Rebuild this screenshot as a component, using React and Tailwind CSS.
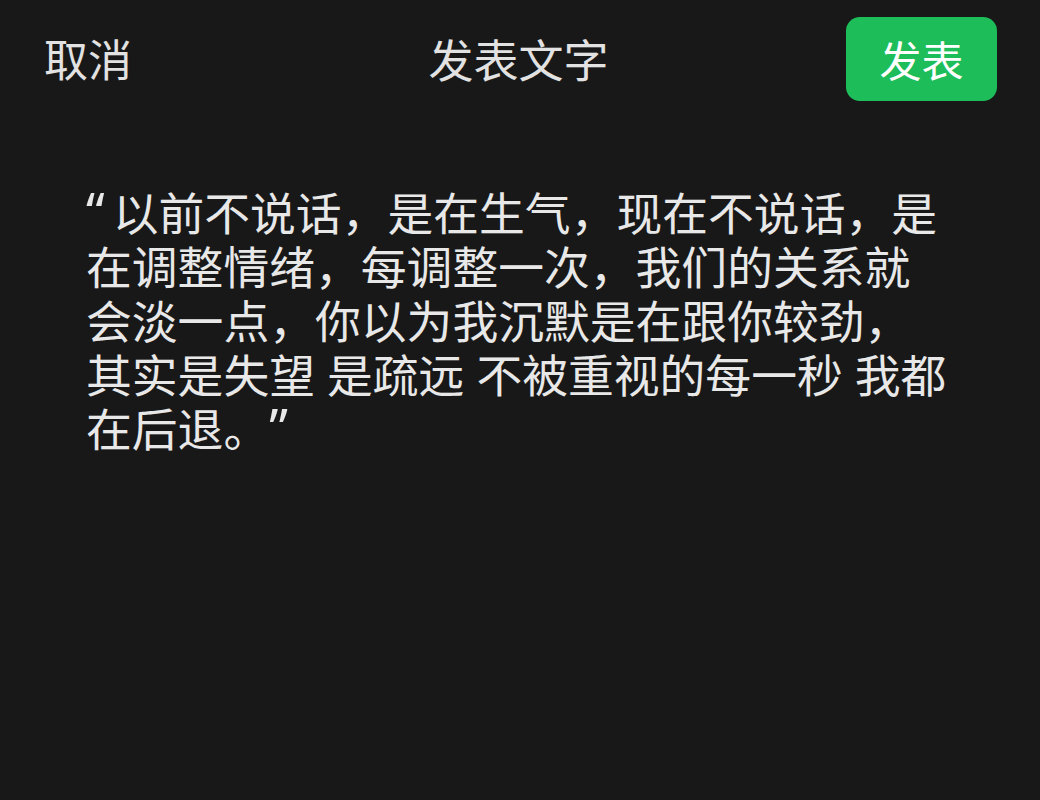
import React from 'react';

const Q = ({ children, className = '' }) => (
  <span className={`font-['Noto_Sans',sans-serif] ${className}`}>{children}</span>
);
const Gap = () => <span className="inline-block w-[12px]" />;

const App = () => {
  return (
    <div className="w-[1040px] h-[800px] bg-[#181818] text-[#e8e8e8] font-['Noto_Sans_CJK_SC',sans-serif] overflow-hidden">
      <header className="grid grid-cols-3 items-center pl-[44px] pr-[43px] pt-[17px]">
        <div className="justify-self-start text-[44px] leading-none text-[#e2e2e2] -mt-[2px]">取消</div>
        <div className="justify-self-center text-[45px] leading-none text-[#e2e2e2] -mt-[2px] -ml-[4px]">发表文字</div>
        <button className="justify-self-end w-[151px] h-[84px] rounded-[14px] bg-[#1dbd5a] text-white text-[42px] leading-none">
          发表
        </button>
      </header>
      <div className="pl-[86px] pt-[83px] text-[45.8px] leading-[54px] whitespace-nowrap [text-spacing-trim:space-all]">
        <div><Q className="mr-[8px] text-[52px] leading-[30px]">“</Q>以前不说话，是在生气，现在不说话，是</div>
        <div>在调整情绪，每调整一次，我们的关系就</div>
        <div>会淡一点，你以为我沉默是在跟你较劲，</div>
        <div>
          其实是失望<Gap />是疏远<Gap />不被重视的每一秒<Gap />我都
        </div>
        <div>在后退。<Q className="text-[52px] leading-[30px]">”</Q></div>
      </div>
    </div>
  );
};

export default App;
